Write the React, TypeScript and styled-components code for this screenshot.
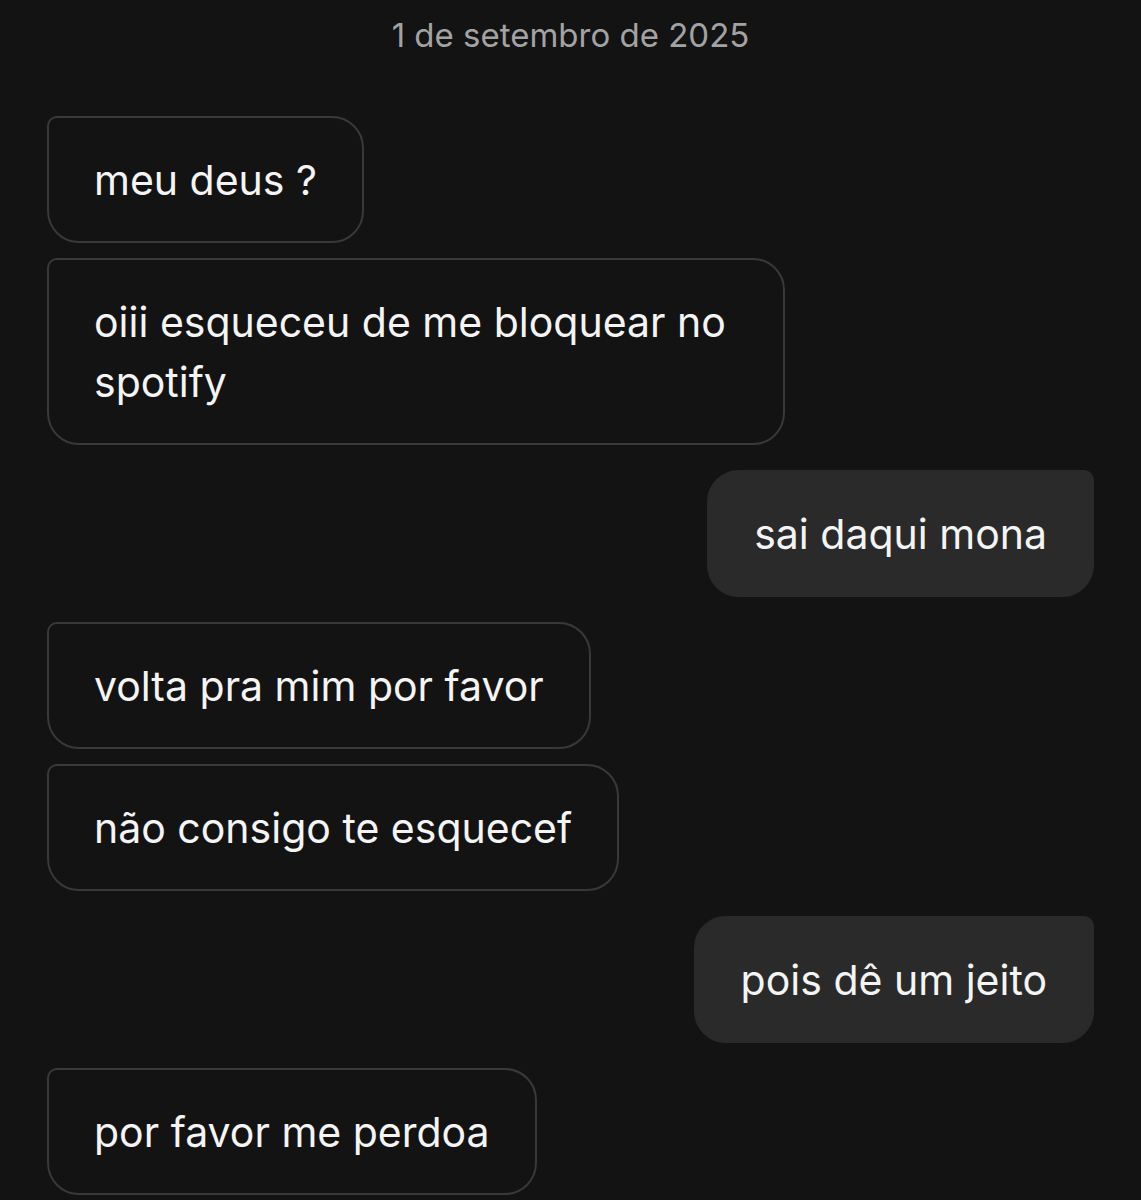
import styled, { createGlobalStyle } from "styled-components";

type Side = "in" | "out";

interface Message {
	side: Side;
	text: string;
}

const messages: Message[] = [
	{ side: "in", text: "meu deus ?" },
	{ side: "in", text: "oiii esqueceu de me bloquear no spotify" },
	{ side: "out", text: "sai daqui mona" },
	{ side: "in", text: "volta pra mim por favor" },
	{ side: "in", text: "não consigo te esquecef" },
	{ side: "out", text: "pois dê um jeito" },
	{ side: "in", text: "por favor me perdoa" },
];

const App = () => {
	return (
		<>
			<GlobalStyle />
			<Screen>
				<DateLabel>1 de setembro de 2025</DateLabel>
				<Thread>
					{messages.map((m, i) => {
						const prev = messages[i - 1];
						const switched = prev !== undefined && prev.side !== m.side;
						return (
							<Row key={i} $side={m.side} $switched={switched}>
								<Bubble $side={m.side}>{m.text}</Bubble>
							</Row>
						);
					})}
				</Thread>
			</Screen>
		</>
	);
};

const GlobalStyle = createGlobalStyle`
	html, body {
		margin: 0;
		background: #131313;
	}
`;

const Screen = styled.div`
	min-height: 1200px;
	background: #131313;
	font-family: Inter, "Open Sans", sans-serif;
	padding: 14px 47px 0;
	box-sizing: border-box;
`;

const DateLabel = styled.div`
	text-align: center;
	color: #a3a3a3;
	font-size: 33px;
	line-height: 42px;
	margin-bottom: 60px;
`;

const Thread = styled.div`
	display: flex;
	flex-direction: column;
`;

const Row = styled.div<{ $side: Side; $switched: boolean }>`
	display: flex;
	justify-content: ${(p) => (p.$side === "out" ? "flex-end" : "flex-start")};
	margin-top: ${(p) => (p.$switched ? "25px" : "15px")};

	&:first-child {
		margin-top: 0;
	}
`;

const Bubble = styled.div<{ $side: Side }>`
	box-sizing: border-box;
	max-width: 738px;
	padding: 32px 45px 31px;
	font-size: 41px;
	line-height: 60px;
	color: #f4f4f4;
	border-radius: ${(p) => (p.$side === "out" ? "32px 10px 32px 32px" : "10px 32px 32px 32px")};
	background: ${(p) => (p.$side === "out" ? "#2a2a2a" : "#131313")};
	border: 2px solid ${(p) => (p.$side === "out" ? "#2a2a2a" : "#393939")};
`;

export default App;
